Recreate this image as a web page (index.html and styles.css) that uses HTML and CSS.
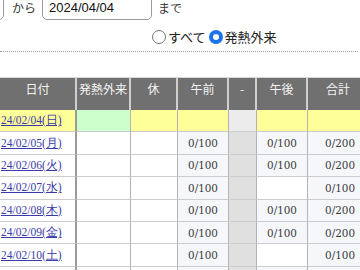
FILE: index.html
```html
<!DOCTYPE html>
<html lang="ja">
<head>
<meta charset="utf-8">
<link rel="stylesheet" href="styles.css">
</head>
<body>
<div class="page">
  <div class="range">
    <div class="box box-from"></div>
    <span class="lbl lbl-from">から</span>
    <div class="box box-to">2024/04/04</div>
    <span class="lbl lbl-to">まで</span>
  </div>
  <div class="modes">
    <div class="opt"><span class="radio"></span><span class="opt-text">すべて</span></div>
    <div class="opt"><span class="radio on"></span><span class="opt-text">発熱外来</span></div>
  </div>
  <div class="rule"></div>
  <table class="sched">
    <thead>
      <tr>
        <th class="c-date">日付</th>
        <th class="c-fever">発熱外来</th>
        <th class="c-off">休</th>
        <th class="c-am">午前</th>
        <th class="c-sep">-</th>
        <th class="c-pm">午後</th>
        <th class="c-sum">合計</th>
      </tr>
    </thead>
    <tbody>
      <tr class="holiday">
        <td class="c-date"><a href="#">24/02/04(日)</a></td>
        <td class="c-fever"></td>
        <td class="c-off"></td>
        <td class="c-am"></td>
        <td class="c-sep"></td>
        <td class="c-pm"></td>
        <td class="c-sum"></td>
      </tr>
      <tr>
        <td class="c-date"><a href="#">24/02/05(月)</a></td>
        <td class="c-fever"></td><td class="c-off"></td>
        <td class="c-am num">0/100</td><td class="c-sep"></td>
        <td class="c-pm num">0/100</td><td class="c-sum num">0/200</td>
      </tr>
      <tr>
        <td class="c-date"><a href="#">24/02/06(火)</a></td>
        <td class="c-fever"></td><td class="c-off"></td>
        <td class="c-am num">0/100</td><td class="c-sep"></td>
        <td class="c-pm num">0/100</td><td class="c-sum num">0/200</td>
      </tr>
      <tr>
        <td class="c-date"><a href="#">24/02/07(水)</a></td>
        <td class="c-fever"></td><td class="c-off"></td>
        <td class="c-am num">0/100</td><td class="c-sep"></td>
        <td class="c-pm empty"></td><td class="c-sum num">0/100</td>
      </tr>
      <tr>
        <td class="c-date"><a href="#">24/02/08(木)</a></td>
        <td class="c-fever"></td><td class="c-off"></td>
        <td class="c-am num">0/100</td><td class="c-sep"></td>
        <td class="c-pm num">0/100</td><td class="c-sum num">0/200</td>
      </tr>
      <tr>
        <td class="c-date"><a href="#">24/02/09(金)</a></td>
        <td class="c-fever"></td><td class="c-off"></td>
        <td class="c-am num">0/100</td><td class="c-sep"></td>
        <td class="c-pm num">0/100</td><td class="c-sum num">0/200</td>
      </tr>
      <tr>
        <td class="c-date"><a href="#">24/02/10(土)</a></td>
        <td class="c-fever"></td><td class="c-off"></td>
        <td class="c-am num">0/100</td><td class="c-sep"></td>
        <td class="c-pm empty"></td><td class="c-sum num">0/100</td>
      </tr>
      <tr>
        <td class="c-date"></td>
        <td class="c-fever"></td><td class="c-off"></td>
        <td class="c-am num"></td><td class="c-sep"></td>
        <td class="c-pm num"></td><td class="c-sum num"></td>
      </tr>
    </tbody>
  </table>
</div>
</body>
</html>
```
FILE: styles.css
```css
html, body {
  margin: 0;
  padding: 0;
  background: #ffffff;
  overflow: hidden;
  width: 360px;
  height: 270px;
}

.page {
  width: 360px;
  font-family: "Noto Sans CJK JP", "Noto Sans", sans-serif;
  color: #222;
}

.range {
  display: flex;
  align-items: center;
  margin-top: -4px;
  height: 24px;
}

.box {
  box-sizing: border-box;
  height: 24px;
  border: 1px solid #9a9a9a;
  border-radius: 5px;
  background: #fff;
  font-family: "Liberation Sans", Arial, sans-serif;
  font-size: 13px;
  line-height: 22px;
  color: #111;
}

.box-from {
  width: 40px;
  margin-left: -36px;
}

.box-to {
  width: 110px;
  padding-left: 6px;
}

.lbl {
  font-size: 12px;
  line-height: 24px;
  color: #333;
}

.lbl-from {
  margin-left: 8px;
  margin-right: 6px;
}

.lbl-to {
  margin-left: 6px;
}

.modes {
  display: flex;
  align-items: center;
  margin-top: 6px;
  margin-left: 152px;
  height: 22px;
}

.opt {
  display: flex;
  align-items: center;
  margin-right: 3px;
}

.opt-text {
  font-size: 13px;
  line-height: 20px;
  color: #222;
  margin-left: 2px;
}

.radio {
  box-sizing: border-box;
  width: 14px;
  height: 14px;
  border-radius: 50%;
  border: 1px solid #767676;
  background: #fff;
}

.radio.on {
  border: 4px solid #1a73e8;
}

.rule {
  margin-top: 3px;
  border-top: 1px dotted #9c9c9c;
  width: 358px;
}

.sched {
  margin-top: 25px;
  border-collapse: separate;
  border-spacing: 0;
  table-layout: fixed;
  width: 370px;
}

.sched th {
  box-sizing: border-box;
  height: 33px;
  background: #707070;
  color: #f4f4f4;
  font-weight: normal;
  font-size: 12px;
  vertical-align: top;
  padding: 3px 0 0 0;
  line-height: 16px;
  border-right: 2px solid #cfcfcf;
  border-top: 1px solid #d8d8d8;
  text-align: center;
}

.sched td {
  box-sizing: border-box;
  height: 22.4px;
  padding: 0;
  border-right: 1px solid #b4b4b4;
  border-bottom: 1px solid #cccccc;
  background: #ffffff;
  font-family: "DejaVu Serif", serif;
  font-size: 10.4px;
  color: #3a3a3a;
  text-align: center;
  vertical-align: middle;
}

.sched .c-date { width: 77px; }
.sched .c-fever { width: 54px; }
.sched .c-off { width: 47px; }
.sched .c-am { width: 51px; }
.sched .c-sep { width: 28px; }
.sched .c-pm { width: 51px; }
.sched .c-sum { width: 62px; }

.sched td.c-date {
  border-right: 2px solid #9a9a9a;
  text-align: left;
  padding-left: 1px;
}

.sched td.c-date a {
  font-family: "Liberation Serif", serif;
  font-size: 11.5px;
  color: #3a3aa8;
  text-decoration: underline;
}

.sched td.c-sep {
  background: #e0e0e0;
}

.sched td.num {
  background: #f5f7fb;
}

.sched td.c-sum {
  text-align: right;
  padding-right: 14px;
  background: #f5f7fb;
}

.sched tr.holiday td {
  background: #ffff99;
}

.sched tr.holiday td.c-fever {
  background: #ccffcc;
}

.sched tr.holiday td.c-sep {
  background: #ececec;
}
```
